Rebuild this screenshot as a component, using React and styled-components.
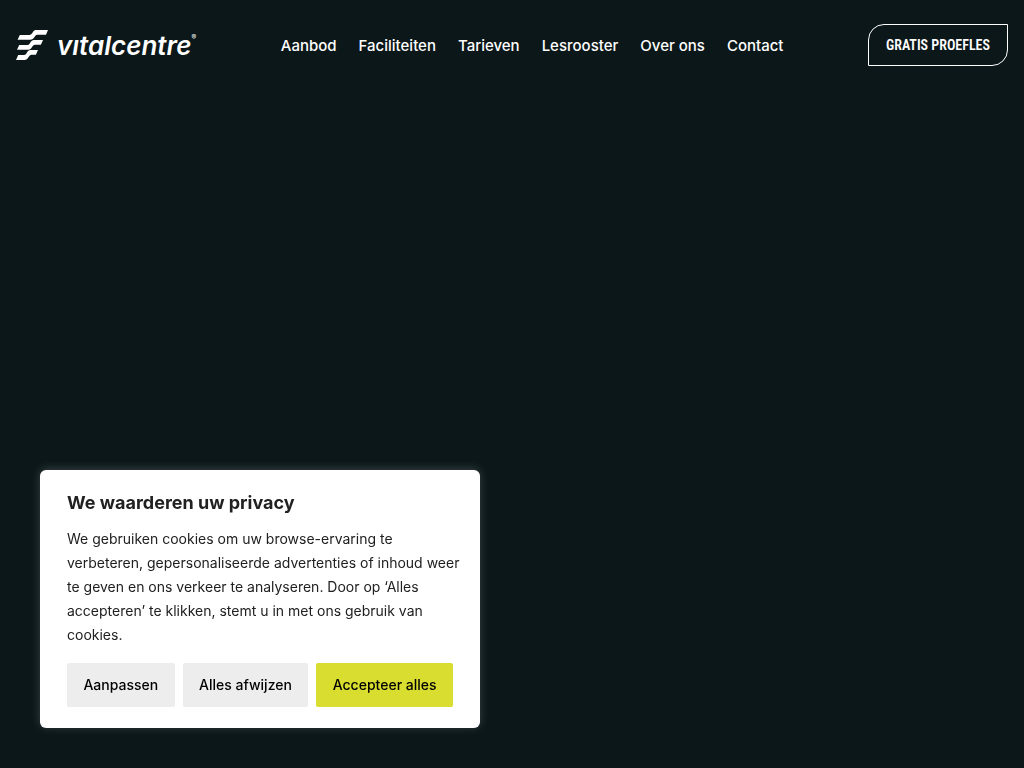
import React from 'react'
import styled, { createGlobalStyle } from 'styled-components'

const links = ['Aanbod', 'Faciliteiten', 'Tarieven', 'Lesrooster', 'Over ons', 'Contact']

const App = () => {
  return (
    <Page>
      <GlobalStyle />
      <Header>
        <Logo href="#" aria-label="vitalcentre">
          <LogoMark viewBox="0 0 32 30" aria-hidden="true">
            <path d="M19.4 0H32L30 4.8H21.4Q20 4.8 19 6.2L17.8 8Q16.4 9.8 14.4 9.8H1.6L3.8 5H13.4Q15 5 16 3.6L17.2 1.6Q18.2 0 19.4 0Z" />
            <path d="M17.8 10H27L24.9 14.8H18.8Q17.4 14.8 16.4 16.4L15.2 18.2Q14 19.8 12 19.8H1L3.2 15H11.2Q12.8 15 13.8 13.4L15 11.6Q16 10 17.8 10Z" />
            <path d="M14.4 20H22L19.9 24.8H15.4Q14 24.8 13 26.4L11.8 28.2Q10.6 30 8.8 30H0L2.2 25H7.8Q9.4 25 10.4 23.4L11.6 21.6Q12.6 20 14.4 20Z" />
          </LogoMark>
          <LogoText>vıtalcentre</LogoText>
          <LogoReg>®</LogoReg>
        </Logo>
        <Nav>
          {links.map((link) => (
            <NavLink href="#" key={link}>{link}</NavLink>
          ))}
        </Nav>
        <TrialButton>Gratis proefles</TrialButton>
      </Header>

      <Cookie aria-labelledby="cookie-title">
        <CookieTitle id="cookie-title">We waarderen uw privacy</CookieTitle>
        <CookieText>
          We gebruiken cookies om uw browse-ervaring te verbeteren, gepersonaliseerde
          advertenties of inhoud weer te geven en ons verkeer te analyseren. Door op
          ‘Alles accepteren’ te klikken, stemt u in met ons gebruik van cookies.
        </CookieText>
        <CookieButtons>
          <CookieButton>Aanpassen</CookieButton>
          <CookieButton>Alles afwijzen</CookieButton>
          <CookieButton $bg="#d8dd30">Accepteer alles</CookieButton>
        </CookieButtons>
      </Cookie>
    </Page>
  )
}

export default App

const GlobalStyle = createGlobalStyle`
  * {
    box-sizing: border-box;
    margin: 0;
    padding: 0;
  }

  body {
    background-color: #0b1719;
    font-family: Inter, sans-serif;
  }
`

const Page = styled.div`
  min-height: 100vh;
  width: 100%;
`

const Header = styled.header`
  display: flex;
  justify-content: space-between;
  align-items: center;
  padding: 24px 16px;
`

const Logo = styled.a`
  display: flex;
  align-items: center;
  color: white;
  text-decoration: none;
`

const LogoMark = styled.svg`
  width: 32px;
  height: 30px;
  margin-right: 9px;
  fill: currentColor;
`

const LogoText = styled.span`
  padding-top: 2px;
  font-size: 26px;
  line-height: 28px;
  font-weight: 600;
  font-style: italic;
`

const LogoReg = styled.sup`
  align-self: flex-start;
  font-size: 7px;
  line-height: 16px;
`

const Nav = styled.nav`
  display: flex;
  gap: 22px;
  padding-top: 2px;
`

const NavLink = styled.a`
  color: white;
  font-size: 15px;
  line-height: 24px;
  font-weight: 500;
  text-decoration: none;
`

const TrialButton = styled.button`
  width: 140px;
  height: 42px;
  border: 1px solid white;
  border-radius: 16px 0;
  background: transparent;
  color: white;
  font-family: 'Roboto Condensed', 'Liberation Sans Narrow', 'Liberation Sans', sans-serif;
  font-size: 14px;
  font-weight: 600;
  text-transform: uppercase;
  white-space: nowrap;
  cursor: pointer;
`

const Cookie = styled.section`
  position: fixed;
  left: 40px;
  bottom: 40px;
  width: 440px;
  max-width: calc(100% - 80px);
  padding: 21px 27px;
  border-radius: 6px;
  background-color: white;
  color: #212121;
  box-shadow: 0 -1px 10px rgba(172, 171, 171, 0.3);
`

const CookieTitle = styled.h2`
  margin-bottom: 12px;
  font-size: 18px;
  line-height: 24px;
  font-weight: 700;
`

const CookieText = styled.p`
  margin: 0 -12px 16px 0;
  font-size: 14px;
  line-height: 24px;
`

const CookieButtons = styled.div`
  display: flex;
  gap: 8px;
`

const CookieButton = styled.button`
  flex: 1 1 auto;
  height: 44px;
  padding-bottom: 2px;
  border: none;
  border-radius: 2px;
  background-color: ${({ $bg }) => $bg || '#ededed'};
  color: black;
  font-family: inherit;
  font-size: 14px;
  font-weight: 500;
  cursor: pointer;
`
